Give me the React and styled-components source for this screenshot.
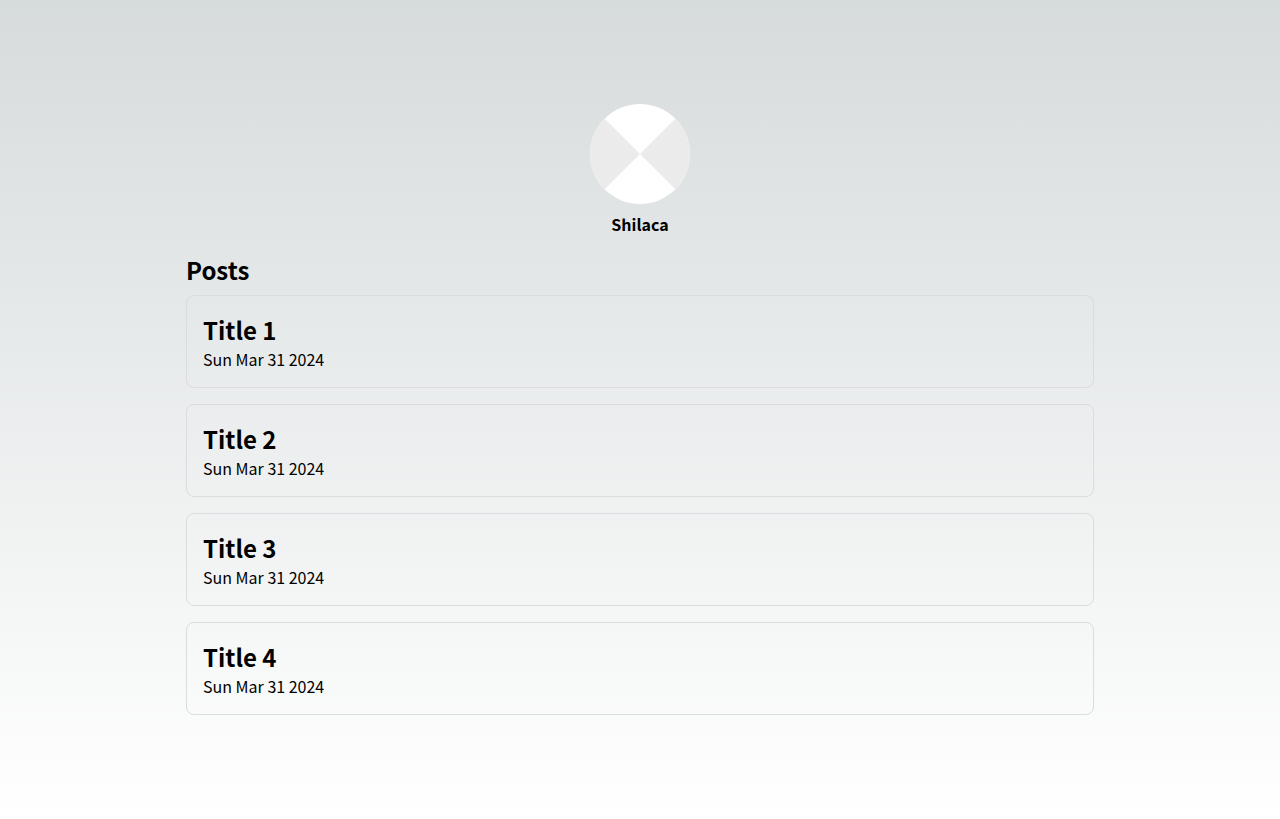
import React from "react";
import styled, { createGlobalStyle } from "styled-components";

const GlobalStyle = createGlobalStyle`
  *, *::before, *::after { box-sizing: border-box; }
  body {
    margin: 0;
    color: #000;
    font-family: "Noto Sans CJK JP", "Noto Sans", sans-serif;
  }
  h1, h2, h3, p { margin: 0; }
`;

const Page = styled.div`
  min-height: 100vh;
  padding: 104px 186px 0;
  background: linear-gradient(to bottom, rgb(214, 219, 220), #fff);
`;

const Profile = styled.header`
  display: flex;
  flex-direction: column;
  align-items: center;
`;

const Avatar = styled.svg`
  display: block;
  width: 100px;
  height: 100px;
  border-radius: 50%;
`;

const Name = styled.p`
  margin-top: 7px;
  font-size: 16px;
  line-height: 27px;
  font-weight: 700;
`;

const Heading = styled.h2`
  margin-top: 14px;
  font-size: 24px;
  line-height: 36px;
  font-weight: 700;
`;

const PostList = styled.section`
  display: flex;
  flex-direction: column;
  gap: 16px;
  margin-top: 7px;
`;

const Card = styled.article`
  height: 93px;
  padding: 16px;
  border: 1px solid #dadcdd;
  border-radius: 8px;
`;

const PostTitle = styled.h3`
  font-size: 24px;
  line-height: 36px;
  font-weight: 700;
`;

const PostDate = styled.p`
  font-size: 16px;
  line-height: 22px;
`;

const posts = ["Title 1", "Title 2", "Title 3", "Title 4"];

export default function App() {
  return (
    <>
      <GlobalStyle />
      <Page>
        <Profile>
          <Avatar viewBox="0 0 100 100" aria-hidden="true">
            <rect width="100" height="100" fill="#fff" />
            <path d="M0 0L50 50L0 100ZM100 0L50 50L100 100Z" fill="#ebebeb" />
          </Avatar>
          <Name>Shilaca</Name>
        </Profile>
        <Heading>Posts</Heading>
        <PostList>
          {posts.map((title) => (
            <Card key={title}>
              <PostTitle>{title}</PostTitle>
              <PostDate>Sun Mar 31 2024</PostDate>
            </Card>
          ))}
        </PostList>
      </Page>
    </>
  );
}
